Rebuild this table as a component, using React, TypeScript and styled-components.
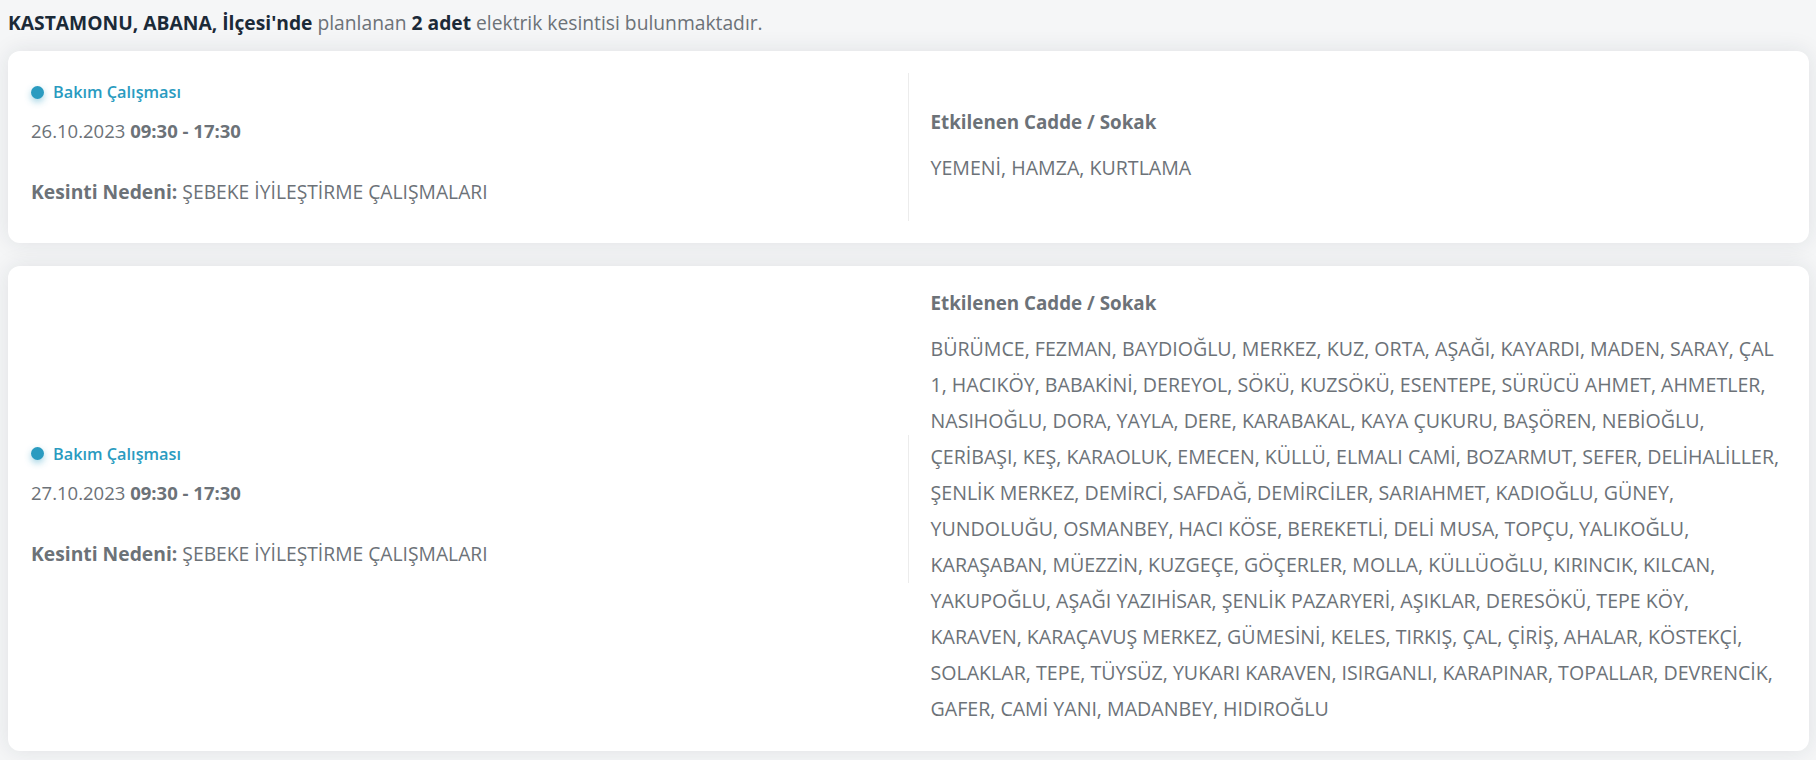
import styled, { createGlobalStyle } from "styled-components";

const GlobalStyle = createGlobalStyle`
  * {
    box-sizing: border-box;
  }

  body {
    margin: 0;
    background-color: #f5f6f7;
    font-family: "Open Sans", "Noto Sans", sans-serif;
    color: #6c7278;
  }
`;

type Outage = {
  date: string;
  time: string;
  reason: string;
  streets: string[];
};

const OUTAGES: Outage[] = [
  {
    date: "26.10.2023",
    time: "09:30 - 17:30",
    reason: "ŞEBEKE İYİLEŞTİRME ÇALIŞMALARI",
    streets: ["YEMENİ", "HAMZA", "KURTLAMA"],
  },
  {
    date: "27.10.2023",
    time: "09:30 - 17:30",
    reason: "ŞEBEKE İYİLEŞTİRME ÇALIŞMALARI",
    streets: [
      "BÜRÜMCE", "FEZMAN", "BAYDIOĞLU", "MERKEZ", "KUZ", "ORTA", "AŞAĞI", "KAYARDI",
      "MADEN", "SARAY", "ÇAL 1", "HACIKÖY", "BABAKİNİ", "DEREYOL", "SÖKÜ", "KUZSÖKÜ",
      "ESENTEPE", "SÜRÜCÜ AHMET", "AHMETLER", "NASIHOĞLU", "DORA", "YAYLA", "DERE",
      "KARABAKAL", "KAYA ÇUKURU", "BAŞÖREN", "NEBİOĞLU", "ÇERİBAŞI", "KEŞ", "KARAOLUK",
      "EMECEN", "KÜLLÜ", "ELMALI CAMİ", "BOZARMUT", "SEFER", "DELİHALİLLER",
      "ŞENLİK MERKEZ", "DEMİRCİ", "SAFDAĞ", "DEMİRCİLER", "SARIAHMET", "KADIOĞLU",
      "GÜNEY", "YUNDOLUĞU", "OSMANBEY", "HACI KÖSE", "BEREKETLİ", "DELİ MUSA", "TOPÇU",
      "YALIKOĞLU", "KARAŞABAN", "MÜEZZİN", "KUZGEÇE", "GÖÇERLER", "MOLLA", "KÜLLÜOĞLU",
      "KIRINCIK", "KILCAN", "YAKUPOĞLU", "AŞAĞI YAZIHİSAR", "ŞENLİK PAZARYERİ",
      "AŞIKLAR", "DERESÖKÜ", "TEPE KÖY", "KARAVEN", "KARAÇAVUŞ MERKEZ", "GÜMESİNİ",
      "KELES", "TIRKIŞ", "ÇAL", "ÇİRİŞ", "AHALAR", "KÖSTEKÇİ", "SOLAKLAR", "TEPE",
      "TÜYSÜZ", "YUKARI KARAVEN", "ISIRGANLI", "KARAPINAR", "TOPALLAR", "DEVRENCİK",
      "GAFER", "CAMİ YANI", "MADANBEY", "HIDIROĞLU",
    ],
  },
];

const App = () => {
  return (
    <>
      <GlobalStyle />
      <Page>
        <Summary>
          <Strong>KASTAMONU, ABANA, İlçesi'nde</Strong> planlanan{" "}
          <Strong>2 adet</Strong> elektrik kesintisi bulunmaktadır.
        </Summary>
        <List>
          {OUTAGES.map((outage) => (
            <Card key={outage.date}>
              <InfoCol>
                <Tag>
                  <Dot />
                  Bakım Çalışması
                </Tag>
                <DateLine>
                  {outage.date} <b>{outage.time}</b>
                </DateLine>
                <Reason>
                  <b>Kesinti Nedeni:</b> {outage.reason}
                </Reason>
              </InfoCol>
              <StreetCol>
                <StreetTitle>Etkilenen Cadde / Sokak</StreetTitle>
                <StreetText>{outage.streets.join(", ")}</StreetText>
              </StreetCol>
            </Card>
          ))}
        </List>
      </Page>
    </>
  );
};

const Page = styled.main`
  padding: 10px 7px 10px 8px;
`;

const Summary = styled.p`
  margin: 0 0 15px;
  font-size: 19.25px;
  line-height: 26px;
  color: #6c7278;
`;

const Strong = styled.strong`
  font-weight: 700;
  color: #1b2a38;
`;

const List = styled.div`
  display: flex;
  flex-direction: column;
  gap: 23px;
`;

const Card = styled.section`
  display: grid;
  grid-template-columns: 1fr 1fr;
  align-items: center;
  padding: 22px 23px;
  background-color: #fff;
  border-radius: 12px;
  box-shadow: 0 0 22px rgba(30, 40, 60, 0.1);
`;

const InfoCol = styled.div`
  height: 148px;
  padding-top: 9px;
  border-right: 1px solid #ececec;
`;

const Tag = styled.div`
  display: flex;
  align-items: center;
  gap: 9px;
  font-size: 16.3px;
  line-height: 20px;
  font-weight: 600;
  color: #2a9bc0;
`;

const Dot = styled.span`
  width: 13px;
  height: 13px;
  border-radius: 50%;
  background-color: #2a9bc0;
  box-shadow: 0 3px 7px rgba(42, 155, 192, 0.45);
`;

const DateLine = styled.div`
  margin-top: 16px;
  font-size: 18.5px;
  line-height: 26px;

  b {
    font-weight: 700;
  }
`;

const Reason = styled.div`
  margin-top: 35px;
  font-size: 19.3px;
  line-height: 26px;

  b {
    font-weight: 700;
  }
`;

const StreetCol = styled.div`
  padding: 2px 3px 2px 22px;
`;

const StreetTitle = styled.h3`
  margin: 0 0 14px;
  font-size: 18.8px;
  line-height: 27px;
  font-weight: 700;
`;

const StreetText = styled.p`
  margin: 0;
  font-size: 19.6px;
  line-height: 36px;
`;

export default App;
